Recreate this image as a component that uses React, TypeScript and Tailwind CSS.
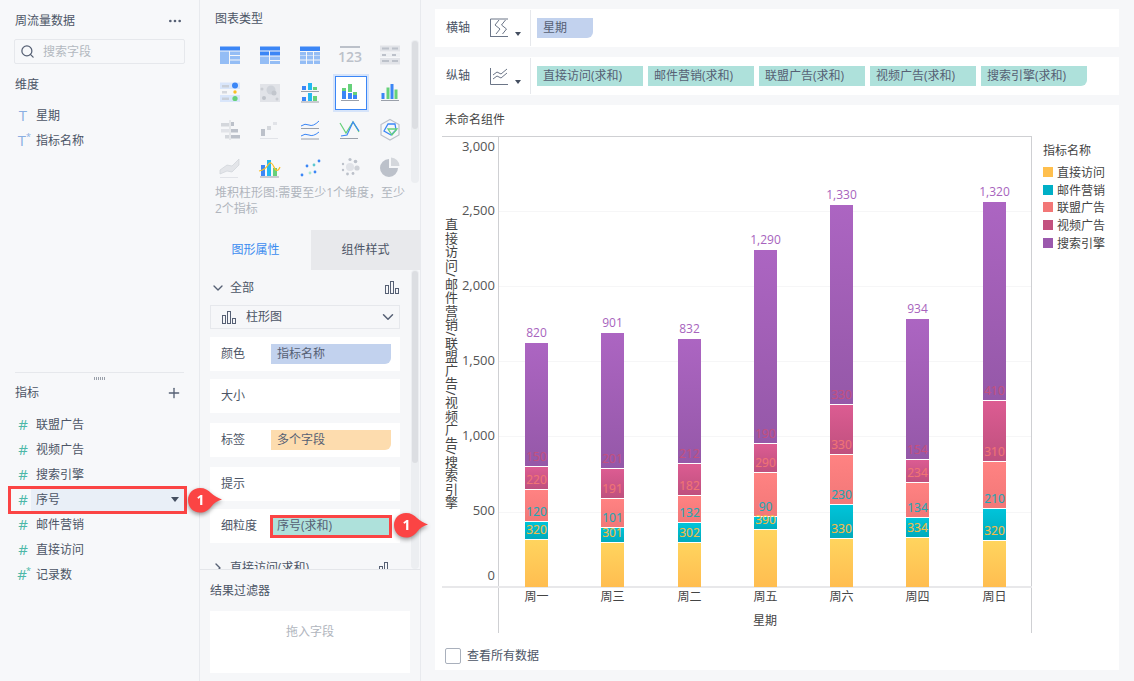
import React from 'react';
import { ChevronDown, ChevronRight, Ellipsis, Plus, Search } from 'lucide-react';

const BLUE = '#3b86f6';
const LIGHT = '#94bdf5';
const PALE = '#d9e6fb';
const GRAY = '#bcc1ca';
const LGRAY = '#e1e3e8';
const GREEN = '#66d17a';
const SKY = '#22b8f0';

const Bars: React.FC<{ items: [number, number, number, string][] }> = ({ items }) => (
    <>
        {items.map(([x, y, h, c], i) => <rect key={i} x={x} y={y} width={4} height={h} fill={c} />)}
    </>
);

const CHART_ICONS: React.ReactNode[] = [
    <>
        <rect x="2" y="3.5" width="20" height="4" fill={BLUE} />
        <rect x="2" y="8.5" width="9" height="12.5" fill={LIGHT} />
        <rect x="12" y="8.5" width="10" height="3.5" fill={LIGHT} />
        <rect x="12" y="13" width="10" height="3.5" fill={LIGHT} />
        <rect x="12" y="17.5" width="10" height="3.5" fill={LIGHT} />
    </>,
    <>
        <rect x="2" y="3.5" width="20" height="4" fill={BLUE} />
        <rect x="2" y="8.5" width="9" height="4" fill={BLUE} />
        <rect x="12" y="8.5" width="10" height="4" fill={BLUE} />
        <rect x="2" y="13.5" width="9" height="7.5" fill={LIGHT} />
        <rect x="12" y="13.5" width="10" height="3.5" fill={LIGHT} />
        <rect x="12" y="18" width="10" height="3" fill={LIGHT} />
    </>,
    <>
        <rect x="2" y="3.5" width="20" height="4.5" fill={BLUE} />
        {[9, 13, 17.5].map(y => [2, 9, 16].map(x => <rect key={`${x}-${y}`} x={x} y={y} width="6" height="3.5" fill={LIGHT} />))}
    </>,
    <>
        <rect x="2" y="3" width="20" height="2" fill={GRAY} />
        <text x="12" y="19" textAnchor="middle" fontSize="14" fontWeight="600" fill={GRAY}>123</text>
    </>,
    <>
        <rect x="2" y="2.5" width="20" height="6" fill={LGRAY} />
        <rect x="2" y="9.5" width="20" height="4.5" fill="#eef0f3" />
        <rect x="2" y="15" width="20" height="6.5" fill={LGRAY} />
        <rect x="4" y="4.5" width="7" height="2" fill={GRAY} />
        <rect x="14" y="4.5" width="6" height="2" fill={GRAY} />
        <rect x="4" y="11" width="4" height="2" fill={GRAY} />
        <rect x="14" y="11" width="4" height="2" fill={GRAY} />
        <rect x="4" y="17" width="7" height="2" fill={GRAY} />
        <rect x="14" y="17" width="6" height="2" fill={GRAY} />
    </>,
    <>
        <rect x="2" y="2.5" width="20" height="6.5" fill={PALE} />
        <rect x="2" y="15" width="20" height="7" fill={PALE} />
        <rect x="4" y="5" width="7" height="2.5" fill="#c9cfd9" />
        <rect x="4" y="11" width="5" height="2.5" fill="#d5d8de" />
        <rect x="4" y="17.5" width="7" height="2.5" fill="#c9cfd9" />
        <circle cx="17" cy="5.5" r="3" fill={BLUE} />
        <circle cx="17" cy="12" r="1.7" fill="#fbbf24" />
        <circle cx="17" cy="18.5" r="2.6" fill={GREEN} />
    </>,
    <>
        <rect x="2" y="4" width="20" height="18" fill={LGRAY} />
        <circle cx="13" cy="10" r="4.5" fill="#cfd3da" />
        <circle cx="16" cy="13" r="2.5" fill="#c2c6cd" />
        <circle cx="6" cy="18" r="2" fill="#bfc3ca" />
        <circle cx="4" cy="9" r="1.5" fill="#cacdd3" />
        <circle cx="19" cy="19" r="1.5" fill="#cacdd3" />
    </>,
    <>
        <Bars items={[[4, 6, 4, BLUE], [10, 3, 7, SKY], [15, 7, 3, GREEN], [4, 17, 4, BLUE], [10, 13, 8, SKY], [15, 16, 5, GREEN]]} />
        <rect x="3" y="11" width="18" height="1" fill="#9aa0aa" />
        <rect x="3" y="21.5" width="18" height="1" fill="#9aa0aa" />
    </>,
    <>
        <Bars items={[[4, 11, 8, BLUE], [10, 13, 6, BLUE], [15, 15, 4, BLUE], [4, 8, 3, GREEN], [10, 4, 8, GREEN], [15, 12, 3, GREEN]]} />
        <rect x="3" y="20" width="18" height="1" fill="#9aa0aa" />
    </>,
    <>
        <rect x="3.5" y="13" width="3" height="6" fill={BLUE} />
        <rect x="8.5" y="7.5" width="3" height="11.5" fill={GREEN} />
        <rect x="12.5" y="4" width="3" height="15" fill={BLUE} />
        <rect x="16.5" y="9.5" width="3" height="9.5" fill={GREEN} />
        <rect x="3" y="20" width="18" height="1" fill="#9aa0aa" />
    </>,
    <>
        <rect x="11.5" y="2" width="1" height="20" fill="#d4d7dc" />
        <rect x="3" y="5" width="8" height="3.5" fill="#d4d7dc" />
        <rect x="13" y="4" width="3" height="4" fill={GRAY} />
        <rect x="3" y="11" width="8" height="3.5" fill={LGRAY} />
        <rect x="13" y="11" width="7" height="3.5" fill={GRAY} />
        <rect x="7" y="17" width="4" height="3.5" fill="#d4d7dc" />
        <rect x="13" y="17" width="9" height="3.5" fill={GRAY} />
    </>,
    <>
        <rect x="3" y="11" width="4" height="7" fill={GRAY} />
        <rect x="9" y="8" width="4" height="4" fill="#d4d7dc" />
        <rect x="15" y="4" width="4" height="3" fill={LGRAY} />
        <rect x="2" y="20" width="18" height="1" fill={LGRAY} />
    </>,
    <>
        <path d="M3 8 Q7 5 11 7 T21 3" fill="none" stroke={BLUE} />
        <rect x="3" y="10" width="18" height="1" fill="#9aa0aa" />
        <path d="M3 18 Q7 15 11 17 T21 14" fill="none" stroke={BLUE} />
        <rect x="3" y="20.5" width="18" height="1" fill="#9aa0aa" />
    </>,
    <>
        <path d="M2 5 L8 15 L15 4 L21 14" fill="none" stroke={GREEN} strokeWidth="1.2" />
        <path d="M3 18 L9 17 L15 4 L21 13" fill="none" stroke={BLUE} strokeWidth="1.2" />
        <rect x="2" y="20" width="18" height="1" fill="#9aa0aa" />
    </>,
    <>
        <path d="M12 1.5 L21 6.5 V17 L12 22 L3 17 V6.5 Z" fill="none" stroke={GRAY} strokeWidth="1.2" />
        <path d="M6 13 L10 6 L17 6 L18 12 L13 17 Z" fill="none" stroke={BLUE} strokeWidth="1.3" />
        <path d="M10 11 L19 11 L14 17 Z" fill="none" stroke={GREEN} strokeWidth="1.3" />
    </>,
    <>
        <path d="M2 15 L9 10 L14 11 L21 4 V10 L14 17 L9 16 L2 19 Z" fill="#e3e5e9" stroke="#cfd2d8" strokeWidth="0.7" />
        <rect x="2" y="22" width="18" height="1" fill={LGRAY} />
    </>,
    <>
        <rect x="3" y="10" width="4" height="11" fill={BLUE} />
        <rect x="9" y="5" width="4" height="16" fill={SKY} />
        <rect x="15" y="13" width="4" height="8" fill={GREEN} />
        <path d="M1 16 Q7 15 10 10 T16 12 T22 12" fill="none" stroke="#fbbf24" strokeWidth="1.2" />
        <rect x="2" y="21.5" width="19" height="1" fill="#9aa0aa" />
    </>,
    <>
        <circle cx="4" cy="20" r="1.4" fill={BLUE} />
        <circle cx="9" cy="11" r="1.4" fill={BLUE} />
        <circle cx="12" cy="18" r="1.4" fill="#a8e6cf" />
        <circle cx="16" cy="10" r="1.4" fill="#5cc8d0" />
        <circle cx="17" cy="17" r="1.4" fill={BLUE} />
        <circle cx="21" cy="6" r="1.4" fill={BLUE} />
    </>,
    <>
        <circle cx="12" cy="12" r="4" fill={LGRAY} />
        <circle cx="12" cy="4.5" r="1.6" fill={GRAY} />
        <circle cx="17.5" cy="6.5" r="1.8" fill={GRAY} />
        <circle cx="19" cy="13" r="2.6" fill="#cfd2d8" />
        <circle cx="15" cy="18.5" r="1.4" fill={GRAY} />
        <circle cx="9.5" cy="19" r="1.4" fill={GRAY} />
        <circle cx="5" cy="15" r="1.2" fill={GRAY} />
        <circle cx="5" cy="9" r="1.2" fill={GRAY} />
    </>,
    <>
        <path d="M11 4 A9 9 0 1 0 20 13 H11 Z" fill={GRAY} />
        <path d="M13 2.5 A9 9 0 0 1 21.5 11 H13 Z" fill="#d4d7dc" />
    </>,
];

const BarGlyph: React.FC = () => (
    <svg width="14" height="13" viewBox="0 0 14 13" fill="none" stroke="#566074" strokeWidth="1">
        <rect x="0.5" y="4.5" width="3" height="8" />
        <rect x="5.5" y="0.5" width="3" height="12" />
        <rect x="10.5" y="7.5" width="3" height="5" />
    </svg>
);

const Caret: React.FC = () => <div className="w-0 h-0 border-x-[3.5px] border-x-transparent border-t-[4px] border-t-[#444e60]" />;

const Marker: React.FC<{ className: string }> = ({ className }) => (
    <svg className={`absolute drop-shadow-[0_2px_2px_rgba(0,0,0,0.4)] ${className}`} width="36" height="28" viewBox="0 0 36 28">
        <path d="M13 1 C18 1 21 3 24 6 C27 9 31 11 35 12.5 C30 14 27 16 24 20 C21 23.5 18 25.5 13 25.5 C6 25.5 1 20 1 13 C1 6.5 6 1 13 1 Z" fill="#fb4444" />
        <text x="13.5" y="18" textAnchor="middle" fontSize="14" fontWeight="700" fill="#fff">1</text>
    </svg>
);

const FieldRow: React.FC<{ icon: string; star?: boolean; color: string; label: string; children?: React.ReactNode }> = ({ icon, star, color, label, children }) => (
    <div className="relative flex items-center h-[25px] pl-[15px]">
        {children}
        <span className={`relative w-[16px] text-center text-[15px] leading-none font-medium ${star ? '-left-[1px]' : ''}`} style={{ color }}>
            {icon}
            {star && <span className="absolute left-[12px] -top-[1px] text-[9px]">*</span>}
        </span>
        <span className="relative ml-[5px] text-[#4c5566]">{label}</span>
    </div>
);

const Pill: React.FC<{ className?: string; children: React.ReactNode }> = ({ className, children }) => (
    <div className={`flex items-center h-[20px] px-[6px] rounded-br-[6px] text-[#566074] ${className ?? ''}`}>{children}</div>
);

const PropRow: React.FC<{ label: string; className?: string; children?: React.ReactNode }> = ({ label, className, children }) => (
    <div className={`flex items-center h-[34px] mx-[10px] w-[190px] bg-white ${className ?? ''}`}>
        <span className="w-[61px] pl-[11px] shrink-0 text-[#4c5566]">{label}</span>
        {children}
    </div>
);

const SERIES = [
    { id: 'y', from: '#ffd45e', to: '#ffbd50', text: '#f5bb45', legend: '#ffbf4d', name: '直接访问' },
    { id: 't', from: '#00c4da', to: '#00aabb', text: '#1ea6b6', legend: '#00afc6', name: '邮件营销' },
    { id: 'c', from: '#ff8282', to: '#f27878', text: '#f07575', legend: '#f27777', name: '联盟广告' },
    { id: 'r', from: '#dc5c92', to: '#bf507e', text: '#c3517f', legend: '#c3517f', name: '视频广告' },
    { id: 'p', from: '#ac65c2', to: '#9558a8', text: '#a763bd', legend: '#9b59ad', name: '搜索引擎' },
];

const BASE_Y = 587;

const COLUMNS = [
    { name: '周一', x: 525, tops: [540, 522, 490, 467, 343], labels: ['320', '120', '220', '150', '820'] },
    { name: '周三', x: 601, tops: [543, 528, 499, 469, 333], labels: ['301', '101', '191', '201', '901'] },
    { name: '周二', x: 678, tops: [543, 523, 496, 464, 339], labels: ['302', '132', '182', '212', '832'] },
    { name: '周五', x: 754, tops: [530, 517, 473, 444, 250], labels: ['390', '90', '290', '190', '1,290'] },
    { name: '周六', x: 830, tops: [539, 505, 455, 405, 205], labels: ['330', '230', '330', '330', '1,330'] },
    { name: '周四', x: 906, tops: [538, 518, 483, 460, 319], labels: ['334', '134', '234', '154', '934'] },
    { name: '周日', x: 983, tops: [541, 509, 462, 401, 202], labels: ['320', '210', '310', '410', '1,320'] },
];

const TICKS = [
    { label: '3,000', text: 146 },
    { label: '2,500', line: 211, text: 210 },
    { label: '2,000', line: 286, text: 285 },
    { label: '1,500', line: 361, text: 360 },
    { label: '1,000', line: 436, text: 435 },
    { label: '500', line: 512, text: 510 },
    { label: '0', text: 575 },
];

const LEGEND_Y = [172, 190, 207, 225, 243];

// svg coordinates are page pixels so they can be read straight off the screenshot
const Chart: React.FC = () => (
    <svg className="block" width="684" height="510" viewBox="435 130 684 510">
        <defs>
            {SERIES.map(s => (
                <linearGradient key={s.id} id={`grad-${s.id}`} x1="0" y1="0" x2="0" y2="1">
                    <stop offset="0" stopColor={s.from} />
                    <stop offset="1" stopColor={s.to} />
                </linearGradient>
            ))}
        </defs>
        {TICKS.filter(t => t.line).map(t => <rect key={t.label} x="499" y={t.line} width="532" height="1" fill="#f6f6f7" />)}
        <rect x="442" y="136" width="590" height="1" fill="#cfd0d3" />
        <rect x="498" y="136" width="1" height="497" fill="#cfd0d3" />
        <rect x="1031" y="136" width="1" height="497" fill="#cfd0d3" />
        <rect x="442" y="586" width="590" height="2" fill="#e8e8ea" />
        {TICKS.map(t => (
            <text key={t.label} x="495" y={t.text} dominantBaseline="central" textAnchor="end" fontSize="13" fill="#555">{t.label}</text>
        ))}
        <text x="451" y="218" fontSize="13" letterSpacing="0.5" fill="#444" style={{ writingMode: 'vertical-rl' }}>直接访问/邮件营销/联盟广告/视频广告/搜索引擎</text>
        {COLUMNS.map(col => (
            <g key={col.name}>
                {col.tops.map((top, i) => {
                    const bottom = i === 0 ? BASE_Y : col.tops[i - 1] - 1;
                    return <rect key={i} x={col.x} y={top} width="23" height={bottom - top} fill={`url(#grad-${SERIES[i].id})`} />;
                })}
                {col.tops.map((top, i) => (
                    <text key={i} x={col.x + 11.5} y={top - 10.5} dominantBaseline="central" textAnchor="middle" fontSize="12" fill={SERIES[i].text} stroke={SERIES[i].text} strokeWidth={i < 4 ? 0.15 : 0}>{col.labels[i]}</text>
                ))}
                <text x={col.x + 11.5} y="596" dominantBaseline="central" textAnchor="middle" fontSize="12" fill="#444">{col.name}</text>
            </g>
        ))}
        <text x="765" y="620" dominantBaseline="central" textAnchor="middle" fontSize="12" fill="#444">星期</text>
        <text x="1043" y="150" dominantBaseline="central" fontSize="12" fill="#444">指标名称</text>
        {SERIES.map((s, i) => (
            <g key={s.id}>
                <rect x="1043" y={LEGEND_Y[i] - 5} width="10" height="10" fill={s.legend} />
                <text x="1057" y={LEGEND_Y[i]} dominantBaseline="central" fontSize="12" fill="#444">{s.name}</text>
            </g>
        ))}
    </svg>
);

export default function App() {
    return (
        <div className="relative flex w-[1134px] h-[681px] overflow-hidden bg-[#f6f7f9] text-[12px] font-['Open_Sans','Noto_Sans_CJK_SC',sans-serif]">
            {/* fields */}
            <aside className="w-[200px] shrink-0 border-r border-[#e8eaee] bg-[#f7f8fa]">
                <div className="h-[372px]">
                    <div className="flex items-center justify-between h-[39px] pt-[2px] pl-[15px] pr-[16px] text-[#4c5566]">
                        <span>周流量数据</span>
                        <Ellipsis size={16} color="#566074" />
                    </div>
                    <div className="flex items-center h-[25px] w-[171px] ml-[14px] pl-[5px] border border-[#e6e8ec] rounded-[2px] text-[#b3b8c0]">
                        <Search size={15} color="#566074" />
                        <span className="ml-[8px]">搜索字段</span>
                    </div>
                    <div className="flex items-center h-[20px] mt-[11px] pl-[15px] text-[#4c5566]">维度</div>
                    <div className="mt-[8px]">
                        <FieldRow icon="T" color="#8aaee2" label="星期" />
                        <FieldRow icon="T" star color="#8aaee2" label="指标名称" />
                    </div>
                </div>
                <div className="mx-[15px] border-t border-[#e6e8ec]" />
                <div className="flex justify-center gap-[1px] mt-[4px] h-[4px]">
                    {[0, 1, 2, 3, 4, 5].map(i => <div key={i} className="w-[1px] h-[3px] bg-[#9aa0aa]" />)}
                </div>
                <div className="flex items-center justify-between h-[20px] mt-[2px] pl-[15px] pr-[17px] text-[#4c5566]">
                    <span>指标</span>
                    <Plus size={16} color="#566074" />
                </div>
                <div className="mt-[9px]">
                    <FieldRow icon="#" color="#4cb8a8" label="联盟广告" />
                    <FieldRow icon="#" color="#4cb8a8" label="视频广告" />
                    <FieldRow icon="#" color="#4cb8a8" label="搜索引擎" />
                    <FieldRow icon="#" color="#4cb8a8" label="序号">
                        <div className="absolute left-[31px] top-0 w-[153px] h-[25px] bg-[#e9eff7]" />
                        <div className="absolute left-[8px] -top-[1px] w-[179px] h-[28px] border-[3px] border-[#fb4444]" />
                        <div className="absolute left-[171px] top-[10px]"><div className="w-0 h-0 border-x-[4.5px] border-x-transparent border-t-[5px] border-t-[#444e60]" /></div>
                    </FieldRow>
                    <FieldRow icon="#" color="#4cb8a8" label="邮件营销" />
                    <FieldRow icon="#" color="#4cb8a8" label="直接访问" />
                    <FieldRow icon="#" star color="#4cb8a8" label="记录数" />
                </div>
            </aside>

            {/* chart settings */}
            <section className="w-[221px] shrink-0 flex flex-col border-r border-[#e8eaee]">
                <div className="relative h-[230px] shrink-0">
                    <div className="flex items-center h-[36px] pt-[2px] pl-[15px] text-[#4c5566]">图表类型</div>
                    <div className="grid grid-cols-5 auto-rows-[37.5px] w-[200px] ml-[10px]">
                        {CHART_ICONS.map((icon, i) => (
                            <div key={i} className="relative flex items-center justify-center">
                                {i === 8 && <div className="absolute left-[5px] top-[2px] w-[32px] h-[34px] bg-white border-[1.5px] border-[#3b86f6] outline-2 outline-[#d6e4fa]" />}
                                <svg className="relative" width="24" height="24" viewBox="0 0 24 24">{icon}</svg>
                            </div>
                        ))}
                    </div>
                    <p className="absolute left-[15px] top-[185px] leading-[16px] text-[#b0b5bd] whitespace-nowrap">堆积柱形图:需要至少1个维度，至少<br />2个指标</p>
                    <div className="absolute left-[211px] top-[40px] w-[8px] h-[143px] rounded-full bg-[#eceef1]">
                        <div className="w-[6px] h-[88px] ml-[1px] mt-[1px] rounded-full bg-[#dcdee2]" />
                    </div>
                </div>
                <div className="flex h-[40px] shrink-0">
                    <div className="flex items-center justify-center w-[111px] text-[#3b8cf0]">图形属性</div>
                    <div className="flex items-center justify-center flex-1 bg-[#e8e9ec] text-[#4c5566]">组件样式</div>
                </div>
                <div className="relative h-[300px] shrink-0 overflow-hidden border-b border-[#e4e6ea]">
                    <div className="flex items-center h-[35px] pl-[10px] pr-[21px] text-[#4c5566]">
                        <ChevronDown size={16} color="#566074" />
                        <span className="ml-[4px] flex-1">全部</span>
                        <BarGlyph />
                    </div>
                    <div className="flex items-center h-[24px] w-[190px] mx-[10px] pl-[11px] pr-[2px] border border-[#e6e8ec] text-[#4c5566]">
                        <BarGlyph />
                        <span className="ml-[10px] flex-1">柱形图</span>
                        <ChevronDown size={18} color="#566074" />
                    </div>
                    <PropRow label="颜色" className="mt-[8px]"><Pill className="w-[120px] bg-[#c2d2ee]">指标名称</Pill></PropRow>
                    <PropRow label="大小" className="mt-[8px]" />
                    <PropRow label="标签" className="mt-[10px]"><Pill className="w-[120px] bg-[#fddcae]">多个字段</Pill></PropRow>
                    <PropRow label="提示" className="mt-[10px]" />
                    <PropRow label="细粒度" className="mt-[8px]">
                        <div className="flex items-center w-[122px] h-[23px] -ml-[1px] px-[4px] border-[3px] border-[#fb4444] bg-[#aee1db] text-[#566074]">序号(求和)</div>
                    </PropRow>
                    <div className="flex items-center h-[18px] mt-[16px] pl-[10px] pr-[27px] text-[#4c5566]">
                        <ChevronRight size={16} color="#566074" />
                        <span className="ml-[4px] flex-1">直接访问(求和)</span>
                        <BarGlyph />
                    </div>
                    <div className="absolute left-[211px] top-0 w-[8px] h-full rounded-full bg-[#eceef1]">
                        <div className="w-[6px] h-[192px] ml-[1px] mt-[1px] rounded-full bg-[#dcdee2]" />
                    </div>
                </div>
                <div className="flex-1 px-[10px]">
                    <div className="flex items-center h-[41px] text-[#4c5566]">结果过滤器</div>
                    <div className="flex justify-center w-[200px] h-[62px] pt-[12px] bg-white text-[#b0b5bd]">拖入字段</div>
                </div>
            </section>

            {/* axes and chart */}
            <main className="flex-1 flex flex-col gap-[10px] pt-[9px] pl-[14px] pr-[15px]">
                <div className="flex items-center h-[38px] bg-white">
                    <span className="w-[55px] pl-[11px] text-[#4c5566]">横轴</span>
                    <svg width="20" height="20" viewBox="0 0 20 20" fill="none" stroke="#6b7587" strokeWidth="1">
                        <path d="M0.5 1 H18 M0.5 1 V19 M0 18.5 H18" />
                        <path d="M9 2 L5 7 L10 11 L6 16 M15.5 2 L11.5 7 L16.5 11 L12.5 16" />
                    </svg>
                    <div className="ml-[5px] mt-[12px] mr-[9px]"><Caret /></div>
                    <div className="h-[36px] border-l border-[#e6e8ec]" />
                    <Pill className="ml-[6px] w-[56px] bg-[#c2d2ee]">星期</Pill>
                </div>
                <div className="flex items-center h-[38px] bg-white">
                    <span className="w-[55px] pl-[11px] text-[#4c5566]">纵轴</span>
                    <svg width="20" height="20" viewBox="0 0 20 20" fill="none" stroke="#6b7587" strokeWidth="1">
                        <path d="M0.5 2 V18.5 H18" />
                        <path d="M3 9 L7 6 L11 8 L17 3 M3 13 L7 10 L11 12 L17 7" />
                    </svg>
                    <div className="ml-[5px] mt-[12px] mr-[9px]"><Caret /></div>
                    <div className="h-[36px] border-l border-[#e6e8ec]" />
                    <div className="flex gap-[5px] ml-[6px]">
                        <Pill className="w-[106px] bg-[#aee1db] rounded-br-none">直接访问(求和)</Pill>
                        <Pill className="w-[106px] bg-[#aee1db] rounded-br-none">邮件营销(求和)</Pill>
                        <Pill className="w-[106px] bg-[#aee1db] rounded-br-none">联盟广告(求和)</Pill>
                        <Pill className="w-[106px] bg-[#aee1db] rounded-br-none">视频广告(求和)</Pill>
                        <Pill className="w-[106px] bg-[#aee1db]">搜索引擎(求和)</Pill>
                    </div>
                </div>
                <div className="h-[565px] bg-white">
                    <div className="flex items-center h-[25px] pt-[4px] pl-[10px] text-[#444]">未命名组件</div>
                    <Chart />
                    <div className="flex items-center gap-[6px] h-[16px] mt-[8px] ml-[10px] text-[#4c5566]">
                        <div className="w-[16px] h-[16px] rounded-[2px] border border-[#a9b0bc] bg-white" />
                        <span>查看所有数据</span>
                    </div>
                </div>
            </main>

            <Marker className="left-[187px] top-[487px]" />
            <Marker className="left-[393px] top-[512px]" />
        </div>
    );
}
